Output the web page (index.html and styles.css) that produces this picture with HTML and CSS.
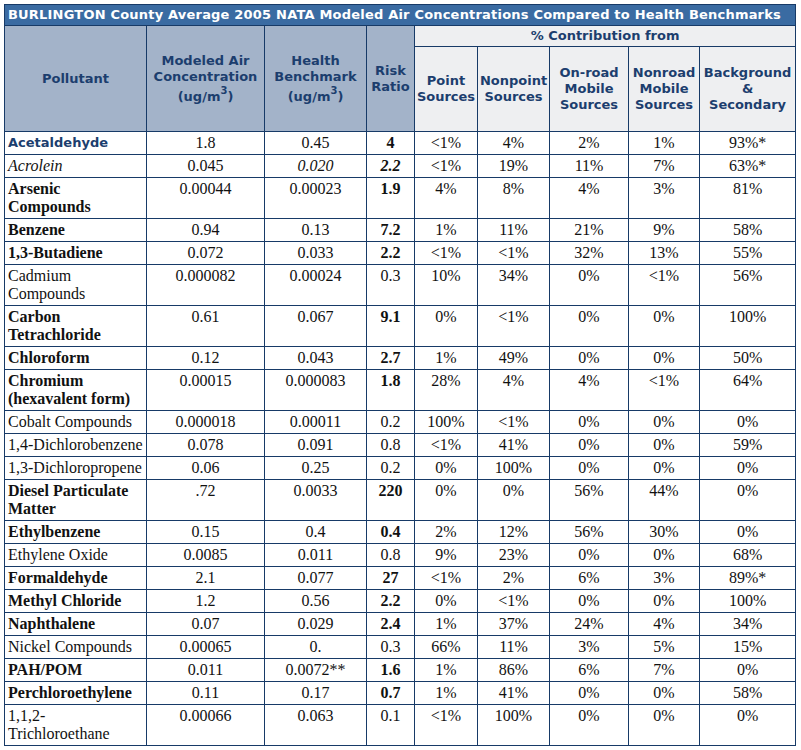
FILE: index.html
```html
<!DOCTYPE html>
<html lang="en">
<head>
<meta charset="utf-8">
<title>BURLINGTON County Average 2005 NATA</title>
<link rel="stylesheet" href="styles.css">
</head>
<body>
<table class="nata">
  <colgroup>
    <col class="c-pol">
    <col class="c-conc">
    <col class="c-bench">
    <col class="c-risk">
    <col class="c-point">
    <col class="c-nonpoint">
    <col class="c-onroad">
    <col class="c-nonroad">
    <col class="c-bg">
  </colgroup>
  <thead>
    <tr class="title-row">
      <th colspan="9">BURLINGTON County Average 2005 NATA Modeled Air Concentrations Compared to Health Benchmarks</th>
    </tr>
    <tr class="head-row1">
      <th rowspan="2" class="main">Pollutant</th>
      <th rowspan="2" class="main">Modeled Air<br>Concentration<br>(ug/m<sup>3</sup>)</th>
      <th rowspan="2" class="main">Health<br>Benchmark<br>(ug/m<sup>3</sup>)</th>
      <th rowspan="2" class="main">Risk<br>Ratio</th>
      <th colspan="5" class="sub">% Contribution from</th>
    </tr>
    <tr class="head-row2">
      <th class="sub">Point<br>Sources</th>
      <th class="sub">Nonpoint<br>Sources</th>
      <th class="sub">On-road<br>Mobile<br>Sources</th>
      <th class="sub">Nonroad<br>Mobile<br>Sources</th>
      <th class="sub">Background<br>&amp;<br>Secondary</th>
    </tr>
  </thead>
  <tbody>
    <tr><td class="name sans">Acetaldehyde</td><td>1.8</td><td>0.45</td><td class="b">4</td><td>&lt;1%</td><td>4%</td><td>2%</td><td>1%</td><td>93%*</td></tr>
    <tr><td class="name i">Acrolein</td><td>0.045</td><td class="i">0.020</td><td class="b i">2.2</td><td>&lt;1%</td><td>19%</td><td>11%</td><td>7%</td><td>63%*</td></tr>
    <tr><td class="name b">Arsenic<br>Compounds</td><td>0.00044</td><td>0.00023</td><td class="b">1.9</td><td>4%</td><td>8%</td><td>4%</td><td>3%</td><td>81%</td></tr>
    <tr><td class="name b">Benzene</td><td>0.94</td><td>0.13</td><td class="b">7.2</td><td>1%</td><td>11%</td><td>21%</td><td>9%</td><td>58%</td></tr>
    <tr><td class="name b">1,3-Butadiene</td><td>0.072</td><td>0.033</td><td class="b">2.2</td><td>&lt;1%</td><td>&lt;1%</td><td>32%</td><td>13%</td><td>55%</td></tr>
    <tr><td class="name">Cadmium<br>Compounds</td><td>0.000082</td><td>0.00024</td><td>0.3</td><td>10%</td><td>34%</td><td>0%</td><td>&lt;1%</td><td>56%</td></tr>
    <tr><td class="name b">Carbon<br>Tetrachloride</td><td>0.61</td><td>0.067</td><td class="b">9.1</td><td>0%</td><td>&lt;1%</td><td>0%</td><td>0%</td><td>100%</td></tr>
    <tr><td class="name b">Chloroform</td><td>0.12</td><td>0.043</td><td class="b">2.7</td><td>1%</td><td>49%</td><td>0%</td><td>0%</td><td>50%</td></tr>
    <tr><td class="name b">Chromium<br>(hexavalent form)</td><td>0.00015</td><td>0.000083</td><td class="b">1.8</td><td>28%</td><td>4%</td><td>4%</td><td>&lt;1%</td><td>64%</td></tr>
    <tr><td class="name">Cobalt Compounds</td><td>0.000018</td><td>0.00011</td><td>0.2</td><td>100%</td><td>&lt;1%</td><td>0%</td><td>0%</td><td>0%</td></tr>
    <tr><td class="name">1,4-Dichlorobenzene</td><td>0.078</td><td>0.091</td><td>0.8</td><td>&lt;1%</td><td>41%</td><td>0%</td><td>0%</td><td>59%</td></tr>
    <tr><td class="name">1,3-Dichloropropene</td><td>0.06</td><td>0.25</td><td>0.2</td><td>0%</td><td>100%</td><td>0%</td><td>0%</td><td>0%</td></tr>
    <tr><td class="name b">Diesel Particulate<br>Matter</td><td>.72</td><td>0.0033</td><td class="b">220</td><td>0%</td><td>0%</td><td>56%</td><td>44%</td><td>0%</td></tr>
    <tr><td class="name b">Ethylbenzene</td><td>0.15</td><td>0.4</td><td class="b">0.4</td><td>2%</td><td>12%</td><td>56%</td><td>30%</td><td>0%</td></tr>
    <tr><td class="name">Ethylene Oxide</td><td>0.0085</td><td>0.011</td><td>0.8</td><td>9%</td><td>23%</td><td>0%</td><td>0%</td><td>68%</td></tr>
    <tr><td class="name b">Formaldehyde</td><td>2.1</td><td>0.077</td><td class="b">27</td><td>&lt;1%</td><td>2%</td><td>6%</td><td>3%</td><td>89%*</td></tr>
    <tr><td class="name b">Methyl Chloride</td><td>1.2</td><td>0.56</td><td class="b">2.2</td><td>0%</td><td>&lt;1%</td><td>0%</td><td>0%</td><td>100%</td></tr>
    <tr><td class="name b">Naphthalene</td><td>0.07</td><td>0.029</td><td class="b">2.4</td><td>1%</td><td>37%</td><td>24%</td><td>4%</td><td>34%</td></tr>
    <tr><td class="name">Nickel Compounds</td><td>0.00065</td><td>0.</td><td>0.3</td><td>66%</td><td>11%</td><td>3%</td><td>5%</td><td>15%</td></tr>
    <tr><td class="name b">PAH/POM</td><td>0.011</td><td>0.0072**</td><td class="b">1.6</td><td>1%</td><td>86%</td><td>6%</td><td>7%</td><td>0%</td></tr>
    <tr><td class="name b">Perchloroethylene</td><td>0.11</td><td>0.17</td><td class="b">0.7</td><td>1%</td><td>41%</td><td>0%</td><td>0%</td><td>58%</td></tr>
    <tr><td class="name">1,1,2-<br>Trichloroethane</td><td>0.00066</td><td>0.063</td><td>0.1</td><td>&lt;1%</td><td>100%</td><td>0%</td><td>0%</td><td>0%</td></tr>
  </tbody>
</table>
</body>
</html>
```

FILE: styles.css
```css
html, body {
  margin: 0;
  padding: 0;
  background: #ffffff;
}

body {
  padding: 4px;
}

.nata {
  border-collapse: collapse;
  table-layout: fixed;
  width: 791px;
  font-family: "Liberation Serif", "Times New Roman", serif;
  font-size: 16px;
  color: #111111;
}

.c-pol { width: 142px; }
.c-conc { width: 118px; }
.c-bench { width: 102px; }
.c-risk { width: 48px; }
.c-point { width: 63px; }
.c-nonpoint { width: 72px; }
.c-onroad { width: 79px; }
.c-nonroad { width: 71px; }
.c-bg { width: 96px; }

.nata th,
.nata td {
  border: 1px solid #173a67;
}

.nata th {
  font-family: "DejaVu Sans", Verdana, sans-serif;
  font-weight: bold;
  font-size: 13px;
  line-height: 16px;
  color: #1c3e6e;
  text-align: center;
  vertical-align: middle;
  padding: 0 1px;
}

.nata th sup {
  font-size: 10px;
  line-height: 12px;
  vertical-align: 7px;
}

.title-row th {
  background: #3a6ba2;
  color: #ffffff;
  height: 20px;
  padding: 0 3px;
  text-align: left;
  white-space: nowrap;
  letter-spacing: 0.2px;
}

.head-row1 th.main {
  background: #a3b3c9;
}

.head-row1 th.sub {
  height: 20px;
}

.nata th.sub {
  background: #eeeff1;
}

.head-row2 th {
  height: 84px;
}

.nata td {
  padding: 2px 3px;
  line-height: 18px;
  text-align: center;
  vertical-align: top;
  background: #ffffff;
}

.nata td.name {
  text-align: left;
}

.nata td.sans {
  font-family: "DejaVu Sans", Verdana, sans-serif;
  font-size: 13px;
  font-weight: bold;
  color: #1c3e6e;
}

.b { font-weight: bold; }
.i { font-style: italic; }
```
